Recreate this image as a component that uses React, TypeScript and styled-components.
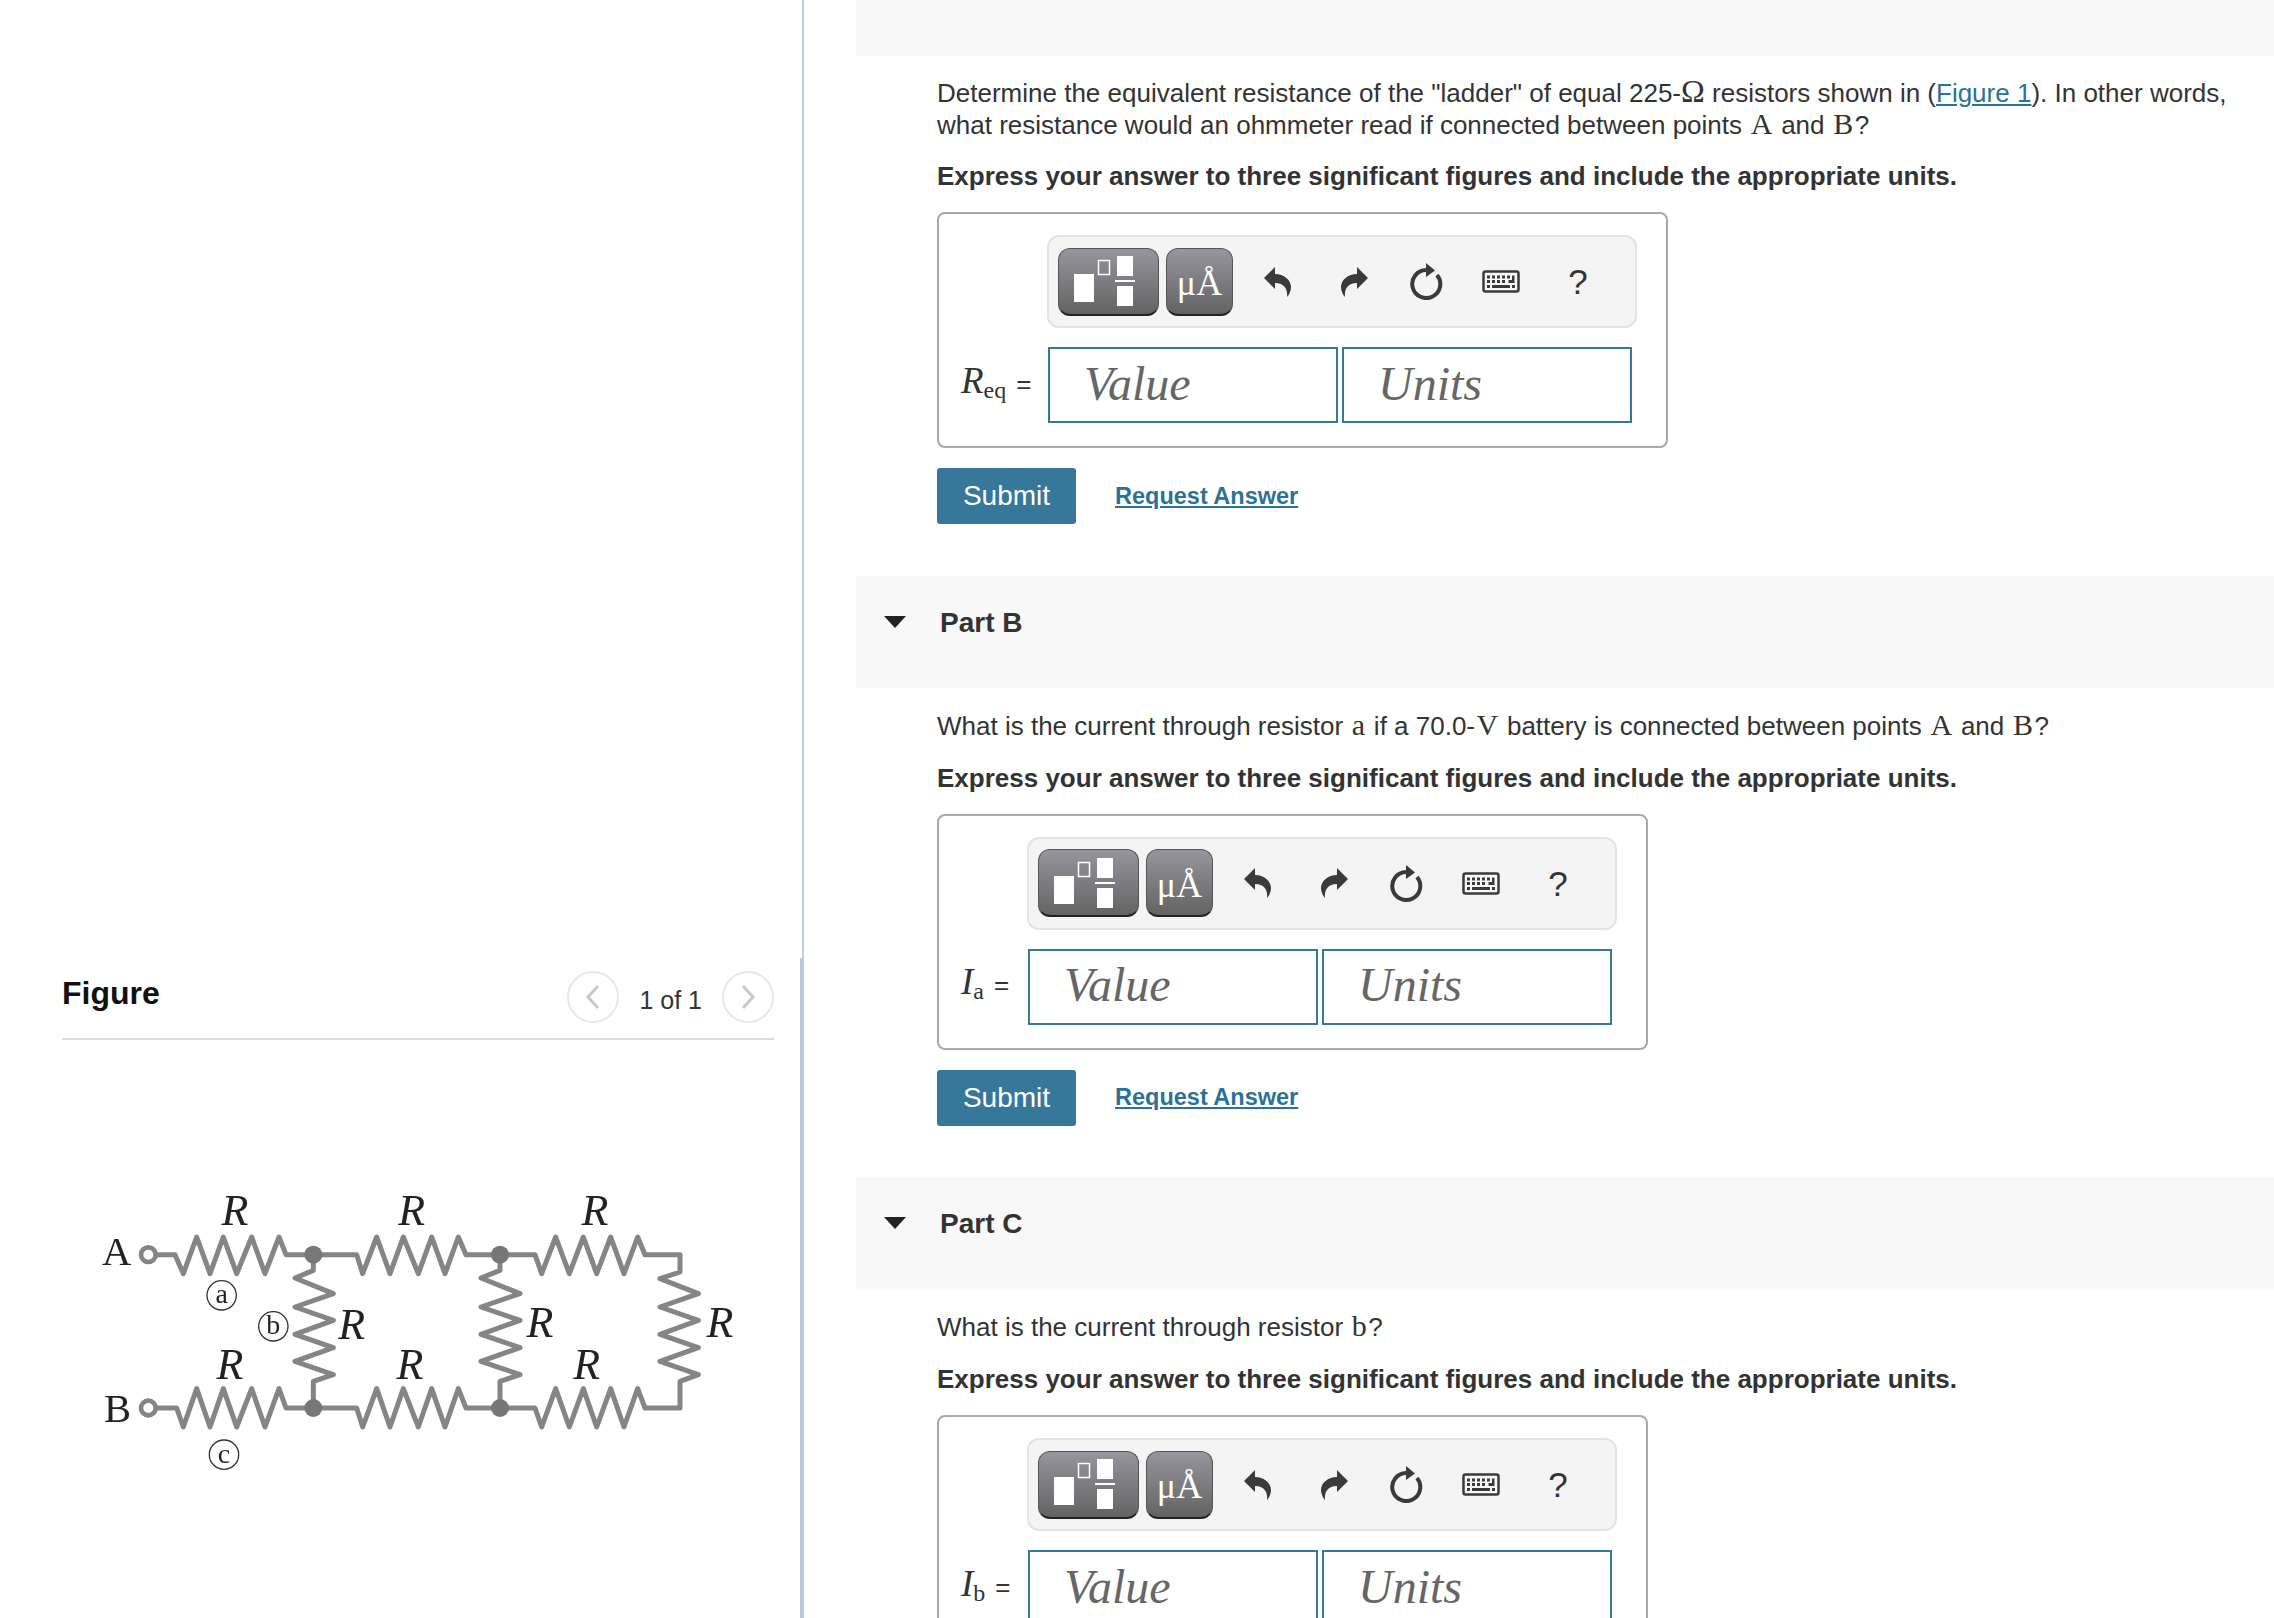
import React from "react";
import styled, { createGlobalStyle } from "styled-components";

const Global = createGlobalStyle`
  html, body { margin: 0; padding: 0; background: #fff; }
  body { font-family: "Liberation Sans", Arial, sans-serif; color: #333; }
`;

const Page = styled.div`
  display: flex;
  width: 100%;
  height: 100vh;
  overflow: hidden;
  background: #fff;
`;

const LeftPanel = styled.aside`
  position: relative;
  flex: 0 0 804px;
  min-width: 0;
  box-sizing: border-box;
  height: 100%;
  padding: 968px 28px 0 62px;
  border-right: 2px solid #c3cfdd;
`;

const ScrollThumb = styled.div`
  position: absolute;
  top: 958px;
  bottom: 0;
  right: -2px;
  width: 4px;
  background: #bbcadb;
`;

const FigureHead = styled.div`
  display: flex;
  align-items: center;
  justify-content: space-between;
  height: 70px;
  border-bottom: 2px solid #dddddd;
`;

const FigureTitle = styled.h2`
  margin: 0 0 20px;
  font-size: 32px;
  font-weight: 700;
  color: #111;
`;

const Pager = styled.div`
  display: flex;
  align-items: center;
  gap: 20px;
  margin-bottom: 12px;
  font-size: 25px;
  color: #333;
`;

const PagerLabel = styled.span`
  padding-top: 6px;
`;

const PagerButton = styled.div`
  display: flex;
  align-items: center;
  justify-content: center;
  box-sizing: border-box;
  width: 52px;
  height: 52px;
  border-radius: 50%;
  border: 2px solid #e8e8e8;
`;

const Circuit = styled.svg`
  display: block;
  width: 700px;
  height: 320px;
  margin: 132px 0 0 18px;
  filter: blur(0.6px);
`;

const RightPanel = styled.main`
  flex: 1;
  min-width: 0;
  padding-left: 52px;
`;

const PartBar = styled.div<{ $height: number }>`
  display: flex;
  align-items: center;
  gap: 34px;
  box-sizing: border-box;
  height: ${(p) => p.$height}px;
  padding: 0 0 18px 28px;
  background: #f8f8f8;
`;

const Caret = styled.span`
  width: 0;
  height: 0;
  margin-bottom: 2px;
  border-left: 11px solid transparent;
  border-right: 11px solid transparent;
  border-top: 12px solid #222;
`;

const PartTitle = styled.h3`
  margin: 0;
  font-size: 28px;
  font-weight: 700;
  color: #333;
`;

const PartBody = styled.section`
  padding: 21px 0 51.5px 81px;
`;

const Prompt = styled.p<{ $single?: boolean }>`
  margin: 0;
  width: 1310px;
  font-size: 26px;
  line-height: ${(p) => (p.$single ? 34 : 32)}px;
  color: #333;
`;

const Instruction = styled.p`
  margin: 19px 0 20px;
  font-size: 26px;
  line-height: 32px;
  font-weight: 700;
  color: #333;
`;

const Sym = styled.span`
  margin: 0 1.5px;
  font-family: "Liberation Serif", "Times New Roman", serif;
  font-size: 30px;
  line-height: 0;
`;

const OhmSym = styled(Sym)`
  margin: 0;
  font-size: 32px;
`;

const TextLink = styled.a`
  color: #2b7396;
  text-decoration: underline;
`;

const AnswerBox = styled.div`
  display: grid;
  grid-template-columns: auto auto;
  width: max-content;
  box-sizing: border-box;
  padding: 21px 29px 23px 22px;
  border: 2px solid #a9a9a9;
  border-radius: 8px;
  row-gap: 19px;
`;

const Toolbar = styled.div`
  grid-column: 2;
  display: flex;
  align-items: center;
  box-sizing: border-box;
  width: 590px;
  height: 93px;
  padding: 0 0 0 9px;
  background: #f4f4f4;
  border: 2px solid #e3e3e3;
  border-radius: 12px;
`;

const ToolButton = styled.button<{ $width: number }>`
  display: flex;
  align-items: center;
  justify-content: center;
  box-sizing: border-box;
  width: ${(p) => p.$width}px;
  height: 68px;
  margin-right: 7px;
  padding: 0;
  color: #fff;
  background: linear-gradient(#97959d, #636363);
  border: 1px solid #555;
  border-bottom: 2px solid #222;
  border-radius: 12px;
`;

const UnitGlyph = styled.span`
  font-family: "Liberation Serif", "Times New Roman", serif;
  font-size: 36px;
  line-height: 1;
  margin-top: 4px;
`;

const IconSlot = styled.span<{ $width: number }>`
  display: flex;
  align-items: center;
  justify-content: center;
  width: ${(p) => p.$width}px;
  color: #3a3a3a;
`;

const HelpGlyph = styled.span`
  font-size: 35px;
  line-height: 1;
  color: #333;
`;

const EquationLabel = styled.div<{ $width: number }>`
  display: flex;
  align-items: baseline;
  width: ${(p) => p.$width}px;
  box-sizing: border-box;
  margin-bottom: 10px;
  font-size: 26px;
  align-self: center;
  color: #333;
`;

const VarName = styled.i`
  font-family: "Liberation Serif", "Times New Roman", serif;
  font-size: 37px;
`;

const VarSub = styled.sub`
  font-family: "Liberation Serif", "Times New Roman", serif;
  font-size: 24px;
  line-height: 0;
  margin-right: 10px;
  position: relative;
  top: 5px;
`;

const Fields = styled.div`
  display: flex;
  gap: 4px;
  margin-left: 1px;
`;

const Field = styled.input`
  box-sizing: border-box;
  width: 290px;
  height: 76px;
  padding: 0 0 4px 34px;
  border: 2px solid #36789a;
  border-radius: 0;
  outline: none;
  background: #fff;
  font-family: "Liberation Serif", "Times New Roman", serif;
  font-style: italic;
  font-size: 48px;
  &::placeholder { color: #666; opacity: 1; }
`;

const Actions = styled.div`
  display: flex;
  align-items: center;
  gap: 39px;
  margin-top: 20px;
`;

const SubmitButton = styled.button`
  width: 139px;
  height: 56px;
  padding: 0;
  border: 0;
  border-radius: 3px;
  background: #37779a;
  color: #fff;
  font-family: inherit;
  font-size: 28px;
`;

const AnswerLink = styled.a`
  color: #2b7396;
  font-size: 23.5px;
  font-weight: 700;
  text-decoration: underline;
`;

const TemplateSvg = styled.svg`
  margin-right: 8px;
`;

const TemplateIcon = () => (
  <TemplateSvg width="61" height="50" viewBox="0 0 61 50" fill="#fff">
    <rect x="0" y="18" width="20" height="28" />
    <rect x="24.5" y="4.5" width="11" height="14" fill="none" stroke="#fff" strokeWidth="1.5" />
    <rect x="43" y="0" width="16" height="20" />
    <rect x="41" y="24" width="20" height="2" />
    <rect x="43" y="30" width="16" height="20" />
  </TemplateSvg>
);

const ReplyIcon = ({ flip }: { flip?: boolean }) => (
  <svg width="27" height="30" viewBox="0 0 27 30" fill="currentColor">
    <path
      transform={flip ? "translate(27 0) scale(-1 1)" : undefined}
      d="M0 11 L11 0 V7 C20 7 27 13 27 20 C27 24 25 28 23 30 C24 22 20 16 11 16 V22 Z"
    />
  </svg>
);

const RefreshIcon = () => (
  <svg width="33" height="37" viewBox="0 0 33 37">
    <path d="M27 12 A14 14 0 1 1 16 7" fill="none" stroke="currentColor" strokeWidth="4" />
    <path d="M16 0 L25 7.5 L16 14 Z" fill="currentColor" />
  </svg>
);

const KeyboardIcon = () => {
  const top = [7, 12, 17, 22, 27];
  const mid = [7, 12, 17, 22];
  return (
    <svg width="38" height="23" viewBox="0 0 38 23" fill="currentColor">
      <rect x="1.5" y="1.5" width="35" height="20" rx="2" fill="#f8f8f8" stroke="currentColor" strokeWidth="2.5" />
      {top.map((x) => <rect key={x} x={x - 2} y="5.5" width="3" height="3" />)}
      {mid.map((x) => <rect key={x} x={x - 2} y="10" width="3" height="3" />)}
      <path d="M30 5.5 h2.5 v7.5 h-6 v-3 h3.5 z" />
      <rect x="5" y="15" width="3" height="3" />
      <rect x="10" y="15" width="18" height="3" />
      <rect x="30" y="15" width="3" height="3" />
    </svg>
  );
};

const Chevron = ({ dir }: { dir: "left" | "right" }) => (
  <svg width="16" height="26" viewBox="0 0 16 26" fill="none" stroke="#c8c8c8" strokeWidth="3">
    <path d={dir === "left" ? "M13 2 L3 13 L13 24" : "M3 2 L13 13 L3 24"} />
  </svg>
);

const wires = [
  "M230 248H285L310 305L350 195L390 305L430 195L470 305L515 195L555 305L597 195L618 248H830L848 305L890 195L930 305L970 195L1015 305L1055 195L1095 305L1135 195L1158 248H1365L1385 305L1427 195L1468 305L1510 195L1550 305L1592 195L1632 305L1673 195L1695 248H1800V300L1740 320L1855 365L1740 405L1855 445L1740 487L1855 527L1740 568L1855 608L1800 628V708H1695L1673 650L1632 765L1592 650L1550 765L1510 650L1468 765L1427 650L1385 765L1365 708H1158L1135 650L1095 765L1055 650L1015 765L970 650L930 765L890 650L848 765L830 708H618L597 650L555 765L515 650L470 765L430 650L390 765L350 650L310 765L290 708H230",
  "M700 248V295L645 318L760 365L645 405L760 445L645 487L760 527L645 568L760 608L700 628V708",
  "M1260 248V295L1203 318L1320 365L1203 405L1320 445L1203 487L1320 527L1203 568L1320 608L1260 628V708",
];

const rLabels = [
  [465, 160], [995, 160], [1545, 160],
  [450, 620], [990, 620], [1520, 620],
  [815, 500], [1380, 495], [1920, 495],
];

const tags = [
  { x: 425, y: 370, t: "a" },
  { x: 580, y: 463, t: "b" },
  { x: 432, y: 848, t: "c" },
];

const LadderCircuit = () => (
  <Circuit viewBox="0 0 2100 960">
    <g fill="none" stroke="#858585" strokeWidth="15" strokeLinejoin="round">
      {wires.map((d) => <path key={d} d={d} />)}
      <circle cx="205" cy="248" r="22" strokeWidth="14" />
      <circle cx="205" cy="708" r="22" strokeWidth="14" />
    </g>
    {[[700, 248], [1260, 248], [700, 708], [1260, 708]].map(([x, y]) => (
      <circle key={`${x}-${y}`} cx={x} cy={y} r="27" fill="#777" />
    ))}
    <g fontFamily="'Liberation Serif', serif" fill="#222">
      <text x="66" y="280" fontSize="122">A</text>
      <text x="72" y="750" fontSize="122">B</text>
      <g fontStyle="italic" fontSize="132" textAnchor="middle">
        {rLabels.map(([x, y]) => <text key={`${x}-${y}`} x={x} y={y}>R</text>)}
      </g>
      {tags.map((g) => (
        <g key={g.t}>
          <circle cx={g.x} cy={g.y} r="44" fill="none" stroke="#333" strokeWidth="4" />
          <text x={g.x} y={g.y + 24} fontSize="84" textAnchor="middle">{g.t}</text>
        </g>
      ))}
    </g>
  </Circuit>
);

const Part = ({
  title,
  label,
  sub,
  labelWidth,
  barHeight,
  children,
}: {
  title?: string;
  label: string;
  sub: string;
  labelWidth: number;
  barHeight: number;
  children: React.ReactNode;
}) => (
  <>
    <PartBar $height={barHeight}>
      {title && <Caret />}
      {title && <PartTitle>{title}</PartTitle>}
    </PartBar>
    <PartBody>
      {children}
      <Instruction>Express your answer to three significant figures and include the appropriate units.</Instruction>
      <AnswerBox>
        <Toolbar>
          <ToolButton $width={101}><TemplateIcon /></ToolButton>
          <ToolButton $width={67}><UnitGlyph>μÅ</UnitGlyph></ToolButton>
          <IconSlot $width={75}><ReplyIcon /></IconSlot>
          <IconSlot $width={79}><ReplyIcon flip /></IconSlot>
          <IconSlot $width={64}><RefreshIcon /></IconSlot>
          <IconSlot $width={86}><KeyboardIcon /></IconSlot>
          <IconSlot $width={68}><HelpGlyph>?</HelpGlyph></IconSlot>
        </Toolbar>
        <EquationLabel $width={labelWidth}>
          <VarName>{label}</VarName>
          <VarSub>{sub}</VarSub>=
        </EquationLabel>
        <Fields>
          <Field placeholder="Value" />
          <Field placeholder="Units" />
        </Fields>
      </AnswerBox>
      <Actions>
        <SubmitButton>Submit</SubmitButton>
        <AnswerLink href="#">Request Answer</AnswerLink>
      </Actions>
    </PartBody>
  </>
);

export default function App() {
  return (
    <Page>
      <Global />
      <LeftPanel>
        <FigureHead>
          <FigureTitle>Figure</FigureTitle>
          <Pager>
            <PagerButton><Chevron dir="left" /></PagerButton>
            <PagerLabel>1 of 1</PagerLabel>
            <PagerButton><Chevron dir="right" /></PagerButton>
          </Pager>
        </FigureHead>
        <LadderCircuit />
        <ScrollThumb />
      </LeftPanel>
      <RightPanel>
        <Part label="R" sub="eq" labelWidth={86} barHeight={56}>
          <Prompt>
            Determine the equivalent resistance of the "ladder" of equal 225-<OhmSym>Ω</OhmSym> resistors shown in (<TextLink href="#">Figure 1</TextLink>). In other words, what resistance would an ohmmeter read if connected between points <Sym>A</Sym> and <Sym>B</Sym>?
          </Prompt>
        </Part>
        <Part title="Part B" label="I" sub="a" labelWidth={66} barHeight={112}>
          <Prompt $single>
            What is the current through resistor <Sym>a</Sym> if a 70.0-<Sym>V</Sym> battery is connected between points <Sym>A</Sym> and <Sym>B</Sym>?
          </Prompt>
        </Part>
        <Part title="Part C" label="I" sub="b" labelWidth={66} barHeight={112}>
          <Prompt $single>
            What is the current through resistor <Sym>b</Sym>?
          </Prompt>
        </Part>
      </RightPanel>
    </Page>
  );
}
